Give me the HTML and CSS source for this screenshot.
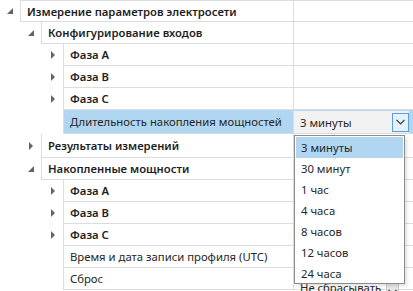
FILE: index.html
```html
<!DOCTYPE html>
<html lang="ru">
<head>
<meta charset="utf-8">
<link rel="stylesheet" href="styles.css">
</head>
<body>
<div class="grid">
  <div class="row first l0">
    <div class="indent"><span class="exp open"></span></div>
    <div class="name cat">Измерение параметров электросети</div>
    <div class="value"></div>
  </div>
  <div class="row l1">
    <div class="indent"><span class="exp open"></span></div>
    <div class="name cat">Конфигурирование входов</div>
    <div class="value"></div>
  </div>
  <div class="row l2">
    <div class="indent"><span class="exp closed"></span></div>
    <div class="name cat">Фаза A</div>
    <div class="value"></div>
  </div>
  <div class="row l2">
    <div class="indent"><span class="exp closed"></span></div>
    <div class="name cat">Фаза B</div>
    <div class="value"></div>
  </div>
  <div class="row l2">
    <div class="indent"><span class="exp closed"></span></div>
    <div class="name cat">Фаза C</div>
    <div class="value"></div>
  </div>
  <div class="row l2 tall selected">
    <div class="indent"></div>
    <div class="name">Длительность накопления мощностей</div>
    <div class="value">
      <div class="combo active">
        <span class="combo-text">3 минуты</span>
        <span class="combo-btn">
          <svg width="9" height="6" viewBox="0 0 9 6"><path d="M0.5 0.8 L4.5 4.8 L8.5 0.8" fill="none" stroke="#333" stroke-width="1.2"/></svg>
        </span>
      </div>
    </div>
  </div>
  <div class="row l1 tall">
    <div class="indent"><span class="exp closed"></span></div>
    <div class="name cat">Результаты измерений</div>
    <div class="value"></div>
  </div>
  <div class="row l1">
    <div class="indent"><span class="exp open"></span></div>
    <div class="name cat">Накопленные мощности</div>
    <div class="value"></div>
  </div>
  <div class="row l2">
    <div class="indent"><span class="exp closed"></span></div>
    <div class="name cat">Фаза A</div>
    <div class="value"></div>
  </div>
  <div class="row l2">
    <div class="indent"><span class="exp closed"></span></div>
    <div class="name cat">Фаза B</div>
    <div class="value"></div>
  </div>
  <div class="row l2">
    <div class="indent"><span class="exp closed"></span></div>
    <div class="name cat">Фаза C</div>
    <div class="value"></div>
  </div>
  <div class="row l2">
    <div class="indent"></div>
    <div class="name">Время и дата записи профиля (UTC)</div>
    <div class="value"></div>
  </div>
  <div class="row l2 last">
    <div class="indent"></div>
    <div class="name">Сброс</div>
    <div class="value">
      <div class="combo low">
        <span class="combo-text">Не сбрасывать</span>
        <span class="combo-btn plain">
          <svg width="9" height="6" viewBox="0 0 9 6"><path d="M0.5 0.8 L4.5 4.8 L8.5 0.8" fill="none" stroke="#333" stroke-width="1.2"/></svg>
        </span>
      </div>
    </div>
  </div>

  <ul class="popup">
    <li class="item sel">3 минуты</li>
    <li class="item">30 минут</li>
    <li class="item">1 час</li>
    <li class="item">4 часа</li>
    <li class="item">8 часов</li>
    <li class="item">12 часов</li>
    <li class="item">24 часа</li>
  </ul>
</div>
</body>
</html>
```

FILE: styles.css
```css
html, body {
  margin: 0;
  padding: 0;
  background: #fff;
  overflow: hidden;
}
body {
  font-family: "Noto Sans", "Open Sans", sans-serif;
  font-size: 11.3px;
  color: #262626;
}
.grid {
  position: relative;
  width: 413px;
  height: 291px;
  overflow: hidden;
}
.row {
  display: flex;
  height: 22px;
}
.row.tall {
  height: 24px;
}
.indent {
  position: relative;
  flex: none;
}
.l0 .indent { width: 20px; }
.l1 .indent { width: 41px; }
.l2 .indent { width: 63px; }

.name {
  flex: 1;
  min-width: 0;
  border-left: 1px solid #dcdcdc;
  border-bottom: 1px solid #dcdcdc;
  padding-left: 6px;
  display: flex;
  align-items: center;
  white-space: nowrap;
  overflow: hidden;
}
.name.cat {
  font-weight: 600;
  color: #1e1e1e;
}
.value {
  flex: none;
  width: 120px;
  box-sizing: border-box;
  border-left: 1px solid #dcdcdc;
  border-bottom: 1px solid #dcdcdc;
  display: flex;
  align-items: center;
}
.first .name, .first .value {
  border-top: 1px solid #dcdcdc;
}
.selected .name {
  background: #b1d6f1;
}
.selected .value {
  background: #b1d6f1;
}

.exp {
  position: absolute;
  top: 50%;
}
.exp.closed {
  right: 8px;
  margin-top: -4px;
  width: 0;
  height: 0;
  border-top: 4px solid transparent;
  border-bottom: 4px solid transparent;
  border-left: 4px solid #646464;
}
.exp.open {
  right: 7px;
  margin-top: -3px;
  width: 0;
  height: 0;
  border-left: 6px solid transparent;
  border-bottom: 6px solid #646464;
}

.combo {
  flex: 1;
  align-self: stretch;
  margin: 1px 4px 0 0;
  background: #f2f2f2;
  display: flex;
  align-items: center;
  justify-content: space-between;
  padding-left: 6px;
  white-space: nowrap;
}
.combo.low {
  background: #fff;
  align-items: flex-start;
  padding-top: 11px;
}
.combo-btn {
  width: 15px;
  height: 17px;
  border: 1px solid #5a9ddd;
  background: #e5f1fb;
  display: flex;
  align-items: center;
  justify-content: center;
}
.combo-btn.plain {
  width: 11px;
  height: 15px;
  border-color: #c8c8c8;
  background: #e6e6e6;
  margin-right: 10px;
  margin-top: 3px;
}

.popup {
  position: absolute;
  left: 294px;
  top: 135px;
  width: 109px;
  height: 146px;
  margin: 0;
  padding: 1px 0 0;
  list-style: none;
  background: #fff;
  border: 1px solid #8c8c8c;
  box-shadow: 2px 2px 3px rgba(0, 0, 0, 0.12);
}
.item {
  height: 21px;
  line-height: 21px;
  padding-left: 5px;
  margin: 0 1px;
}
.item.sel {
  background: #b1d6f1;
}
```
